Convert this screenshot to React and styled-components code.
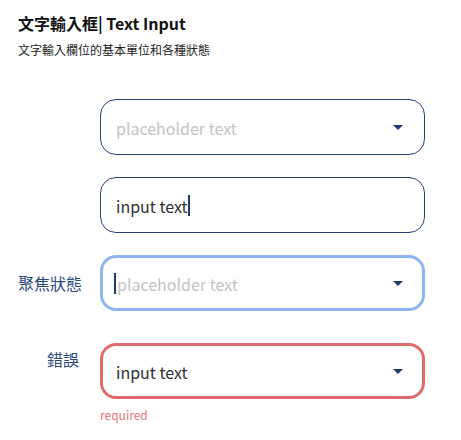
import React from "react";
import styled, { createGlobalStyle } from "styled-components";

const Global = createGlobalStyle`
  html, body { margin: 0; padding: 0; background: #fff; }
  body { font-family: "Noto Sans CJK TC", "Noto Sans", sans-serif; }
`;

const Page = styled.div`
  padding: 12px 36px 0 18px;
  width: 461px;
  box-sizing: border-box;
`;

const Title = styled.h1`
  margin: 0;
  font-size: 16px;
  font-weight: 700;
  line-height: 22px;
  color: #111;
`;

const Subtitle = styled.p`
  margin: 7px 0 0;
  font-size: 12px;
  line-height: 18px;
  color: #222;
`;

const Form = styled.div`
  margin-top: 40px;
  display: flex;
  flex-direction: column;
`;

const Row = styled.div`
  display: grid;
  grid-template-columns: 64px 325px;
  column-gap: 18px;
  align-items: ${(p) => (p.$top ? "start" : "center")};
  margin-top: ${(p) => p.$gap || 0}px;
`;

const Label = styled.div`
  font-size: 16px;
  line-height: 22px;
  color: #2b4a7e;
  text-align: right;
  white-space: nowrap;
  padding-top: ${(p) => p.$pt || 0}px;
  margin-right: ${(p) => p.$mr || 0}px;
`;

const Field = styled.div`
  grid-column: 2;
  display: flex;
  flex-direction: column;
`;

const borders = {
  normal: { w: 1, c: "#25437a" },
  focus: { w: 3, c: "#8db4f3" },
  error: { w: 3, c: "#e06a6a" },
};

const Box = styled.div`
  box-sizing: border-box;
  height: 56px;
  border-radius: 16px;
  border: ${(p) => borders[p.$state].w}px solid ${(p) => borders[p.$state].c};
  padding: 1px ${(p) => 22 - borders[p.$state].w}px 0 ${(p) => 16 - borders[p.$state].w}px;
  display: flex;
  align-items: center;
  background: #fff;
`;

const Value = styled.span`
  flex: 1;
  display: flex;
  align-items: center;
  font-size: 16px;
  line-height: 22px;
  color: ${(p) => (p.$placeholder ? "#c3c3c3" : "#2f2f2f")};
`;

const Caret = styled.span`
  display: inline-block;
  width: 2px;
  height: 21px;
  background: #1f3c72;
  margin-left: ${(p) => p.$ml || 0}px;
  margin-right: ${(p) => p.$mr || 0}px;
`;

const Arrow = styled.span`
  width: 0;
  height: 0;
  border-left: 5px solid transparent;
  border-right: 5px solid transparent;
  border-top: 5px solid #1f3a6c;
`;

const Helper = styled.div`
  margin-top: 8px;
  font-size: 12px;
  line-height: 16px;
  color: #e07676;
`;

export default function App() {
  return (
    <Page>
      <Global />
      <Title>文字輸入框| Text Input</Title>
      <Subtitle>文字輸入欄位的基本單位和各種狀態</Subtitle>
      <Form>
        <Row>
          <Label />
          <Field>
            <Box $state="normal">
              <Value $placeholder>placeholder text</Value>
              <Arrow />
            </Box>
          </Field>
        </Row>
        <Row $gap={22}>
          <Label />
          <Field>
            <Box $state="normal">
              <Value>
                input text
                <Caret />
              </Value>
            </Box>
          </Field>
        </Row>
        <Row $gap={22}>
          <Label>聚焦狀態</Label>
          <Field>
            <Box $state="focus">
              <Value $placeholder>
                <Caret $ml={-2} $mr={1} />
                placeholder text
              </Value>
              <Arrow />
            </Box>
          </Field>
        </Row>
        <Row $gap={32} $top>
          <Label $pt={5} $mr={3}>錯誤</Label>
          <Field>
            <Box $state="error">
              <Value>input text</Value>
              <Arrow />
            </Box>
            <Helper>required</Helper>
          </Field>
        </Row>
      </Form>
    </Page>
  );
}
